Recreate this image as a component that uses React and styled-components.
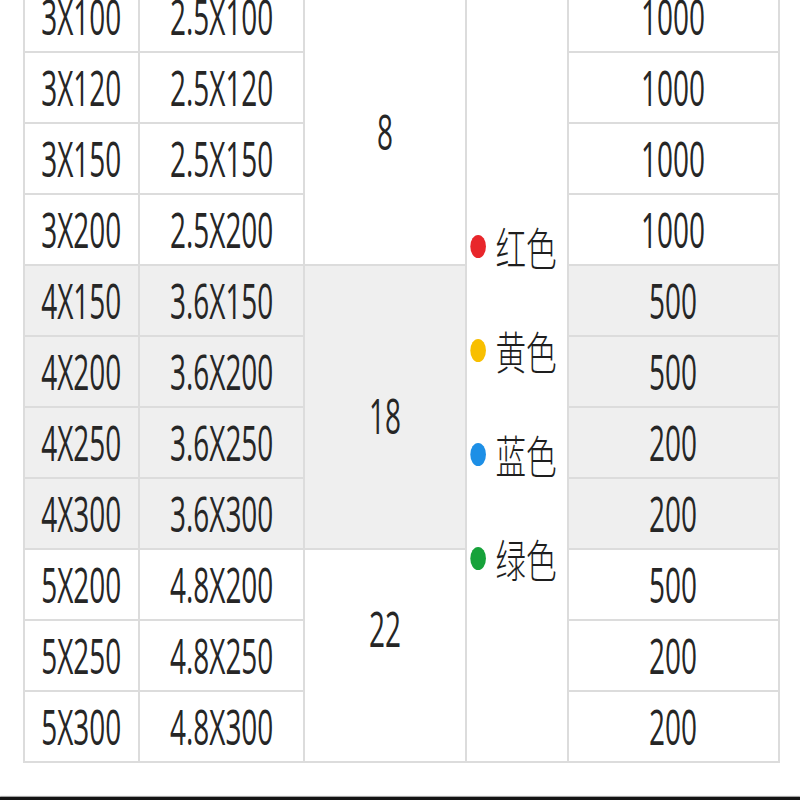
import React from "react";
import styled, { createGlobalStyle } from "styled-components";

const GlobalStyle = createGlobalStyle`
  html, body {
    margin: 0;
    padding: 0;
    background: #ffffff;
  }
`;

const rows = [
  { size: "3X100", inner: "2.5X100", qty: "1000" },
  { size: "3X120", inner: "2.5X120", qty: "1000" },
  { size: "3X150", inner: "2.5X150", qty: "1000" },
  { size: "3X200", inner: "2.5X200", qty: "1000" },
  { size: "4X150", inner: "3.6X150", qty: "500", shade: true },
  { size: "4X200", inner: "3.6X200", qty: "500", shade: true },
  { size: "4X250", inner: "3.6X250", qty: "200", shade: true },
  { size: "4X300", inner: "3.6X300", qty: "200", shade: true },
  { size: "5X200", inner: "4.8X200", qty: "500" },
  { size: "5X250", inner: "4.8X250", qty: "200" },
  { size: "5X300", inner: "4.8X300", qty: "200" },
];

// merged cells of the third column; shift nudges the number off-centre
const groups = [
  { value: "8", start: 1, span: 4, shift: 8 },
  { value: "18", start: 5, span: 4, shift: 8, shade: true },
  { value: "22", start: 9, span: 3, shift: -27 },
];

const colors = [
  { name: "红色", dot: "#e8262b" },
  { name: "黄色", dot: "#f8bf00" },
  { name: "蓝色", dot: "#1d8fe6" },
  { name: "绿色", dot: "#16a23a" },
];

const Page = styled.div`
  height: 800px;
  overflow: hidden;
  display: flex;
  flex-direction: column;
  justify-content: space-between;
`;

const Table = styled.div`
  margin: -18px 0 0 23px;
  width: 755px;
  display: grid;
  grid-template-columns: 115px 165px 162px 102px 211px;
  grid-template-rows: repeat(11, 71px);
  border-left: 2px solid #dcdcdc;
  box-sizing: border-box;
`;

const Cell = styled.div`
  grid-column: ${(p) => p.col};
  grid-row: ${(p) => p.row} / span ${(p) => p.span || 1};
  background: ${(p) => (p.shade ? "#efefef" : "#ffffff")};
  border-right: 2px solid #dcdcdc;
  border-bottom: 2px solid #dcdcdc;
  box-sizing: border-box;
  display: flex;
  align-items: center;
  justify-content: center;
  padding-top: ${(p) => (p.shift > 0 ? p.shift * 2 : 0)}px;
  padding-bottom: ${(p) => (p.shift < 0 ? -p.shift * 2 : 0)}px;
`;

const Value = styled.span`
  display: inline-block;
  font-family: "Open Sans", "Noto Sans", sans-serif;
  font-weight: 400;
  font-size: 49px;
  line-height: 49px;
  color: #262626;
  white-space: nowrap;
  transform: scaleX(0.57);
`;

const ColorList = styled.div`
  grid-column: 4;
  grid-row: 1 / span 11;
  border-right: 2px solid #dcdcdc;
  border-bottom: 2px solid #dcdcdc;
  box-sizing: border-box;
  background: #ffffff;
  display: flex;
  flex-direction: column;
  align-items: center;
  gap: 58px;
  padding-top: 241px;
`;

const ColorLabel = styled.div`
  display: flex;
  align-items: center;
  gap: 14px;
  height: 46px;
  transform: scaleX(0.68);
  margin-left: -8px;
  font-family: "Noto Sans CJK SC", sans-serif;
  font-weight: 300;
  font-size: 45px;
  color: #1e1e1e;
  white-space: nowrap;
`;

const Dot = styled.span`
  width: 23px;
  height: 23px;
  border-radius: 50%;
  background: ${(p) => p.color};
  flex: none;
`;

const BottomBar = styled.div`
  height: 3px;
  background: #141414;
  box-shadow: 0 -1px 1px #9a9a9a;
`;

export default function App() {
  return (
    <>
      <GlobalStyle />
      <Page>
        <Table>
          {rows.map((r, i) => (
            <React.Fragment key={r.size}>
              <Cell col={1} row={i + 1} shade={r.shade}>
                <Value>{r.size}</Value>
              </Cell>
              <Cell col={2} row={i + 1} shade={r.shade}>
                <Value>{r.inner}</Value>
              </Cell>
              <Cell col={5} row={i + 1} shade={r.shade}>
                <Value>{r.qty}</Value>
              </Cell>
            </React.Fragment>
          ))}
          {groups.map((g) => (
            <Cell key={g.value} col={3} row={g.start} span={g.span} shade={g.shade} shift={g.shift}>
              <Value>{g.value}</Value>
            </Cell>
          ))}
          <ColorList>
            {colors.map((c) => (
              <ColorLabel key={c.name}>
                <Dot color={c.dot} />
                {c.name}
              </ColorLabel>
            ))}
          </ColorList>
        </Table>
        <BottomBar />
      </Page>
    </>
  );
}
